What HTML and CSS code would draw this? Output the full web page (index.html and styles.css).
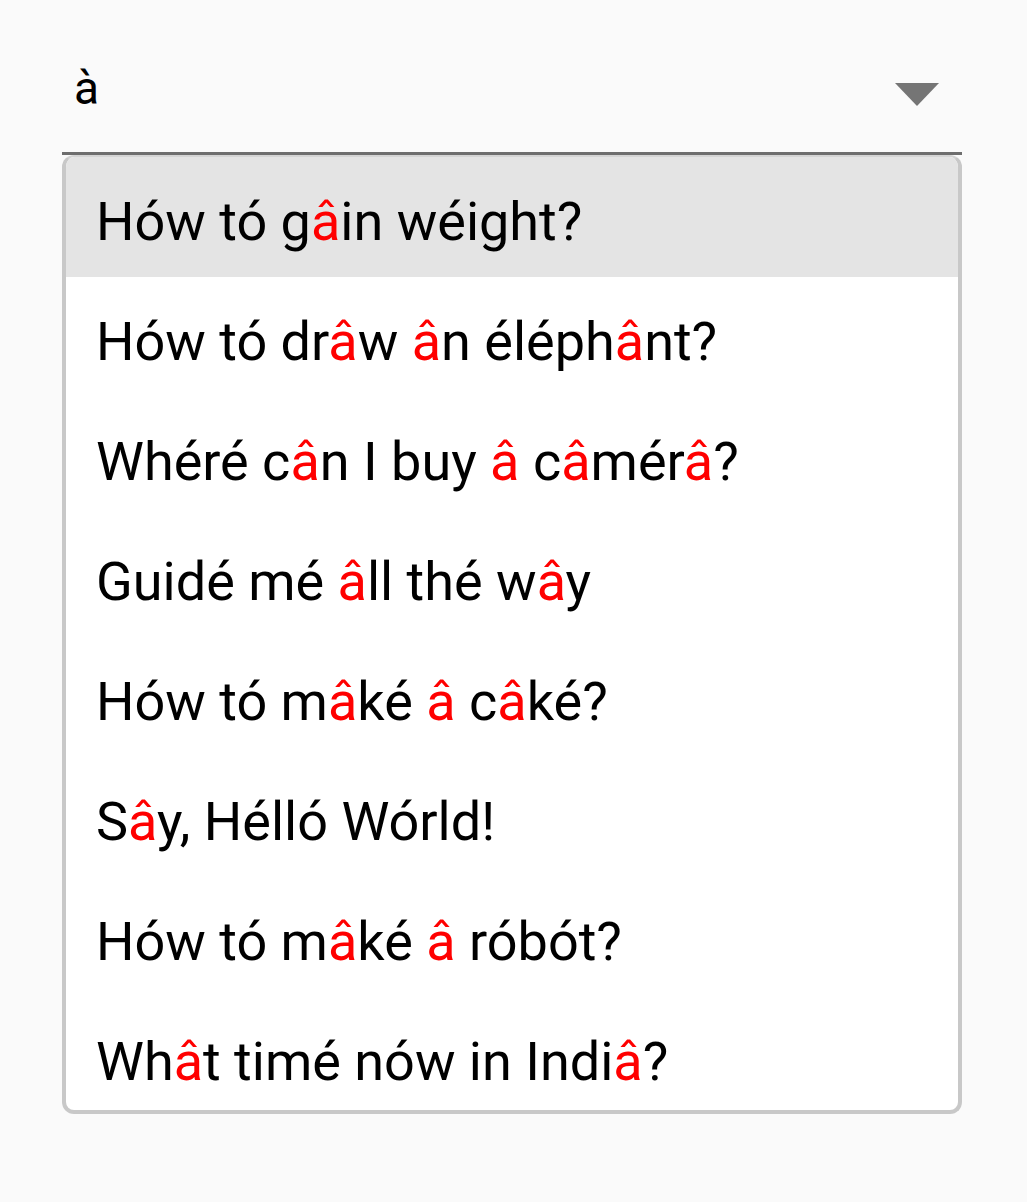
FILE: index.html
```html
<!DOCTYPE html>
<html>
<head>
<meta charset="utf-8">
<link rel="stylesheet" href="styles.css">
</head>
<body>
<div class="wrap">
  <div class="field">
    <span class="value">à</span>
    <svg class="arrow" width="44" height="23" viewBox="0 0 44 23"><path d="M0 0 H44 L22 23 Z" fill="#757575"/></svg>
  </div>
  <ul class="menu">
    <li class="item active">Hów tó g<span class="hl">â</span>in wéight?</li>
    <li class="item">Hów tó dr<span class="hl">â</span>w <span class="hl">â</span>n éléph<span class="hl">â</span>nt?</li>
    <li class="item">Whéré c<span class="hl">â</span>n I buy <span class="hl">â</span> c<span class="hl">â</span>mér<span class="hl">â</span>?</li>
    <li class="item">Guidé mé <span class="hl">â</span>ll thé w<span class="hl">â</span>y</li>
    <li class="item">Hów tó m<span class="hl">â</span>ké <span class="hl">â</span> c<span class="hl">â</span>ké?</li>
    <li class="item">S<span class="hl">â</span>y, Hélló Wórld!</li>
    <li class="item">Hów tó m<span class="hl">â</span>ké <span class="hl">â</span> róbót?</li>
    <li class="item">Wh<span class="hl">â</span>t timé nów in Indi<span class="hl">â</span>?</li>
  </ul>
</div>
</body>
</html>
```

FILE: styles.css
```css
html, body {
  margin: 0;
  padding: 0;
  background: #fafafa;
  font-family: Roboto, "Noto Sans", sans-serif;
}
.wrap {
  width: 900px;
  margin-left: 62px;
}
.field {
  height: 152px;
  border-bottom: 3px solid #6e6e6e;
  display: flex;
  justify-content: space-between;
  align-items: flex-start;
  padding-left: 12px;
  padding-right: 23px;
  box-sizing: content-box;
}
.value {
  font-size: 46px;
  color: #000;
  margin-top: 61px;
  line-height: normal;
}
.arrow {
  margin-top: 83px;
  display: block;
}
.menu {
  list-style: none;
  margin: 0;
  padding: 0;
  height: 959px;
  box-sizing: border-box;
  border: 4px solid #c8c8c8;
  border-top: 2px solid #d4d4d4;
  border-radius: 12px;
  background: #fff;
  overflow: hidden;
}
.item {
  height: 120px;
  box-sizing: border-box;
  padding-top: 9px;
  line-height: 111px;
  padding-left: 30px;
  font-size: 54px;
  color: #000;
  white-space: nowrap;
}
.item.active {
  background: #e4e4e4;
}
.hl {
  color: #ff0000;
}
```
